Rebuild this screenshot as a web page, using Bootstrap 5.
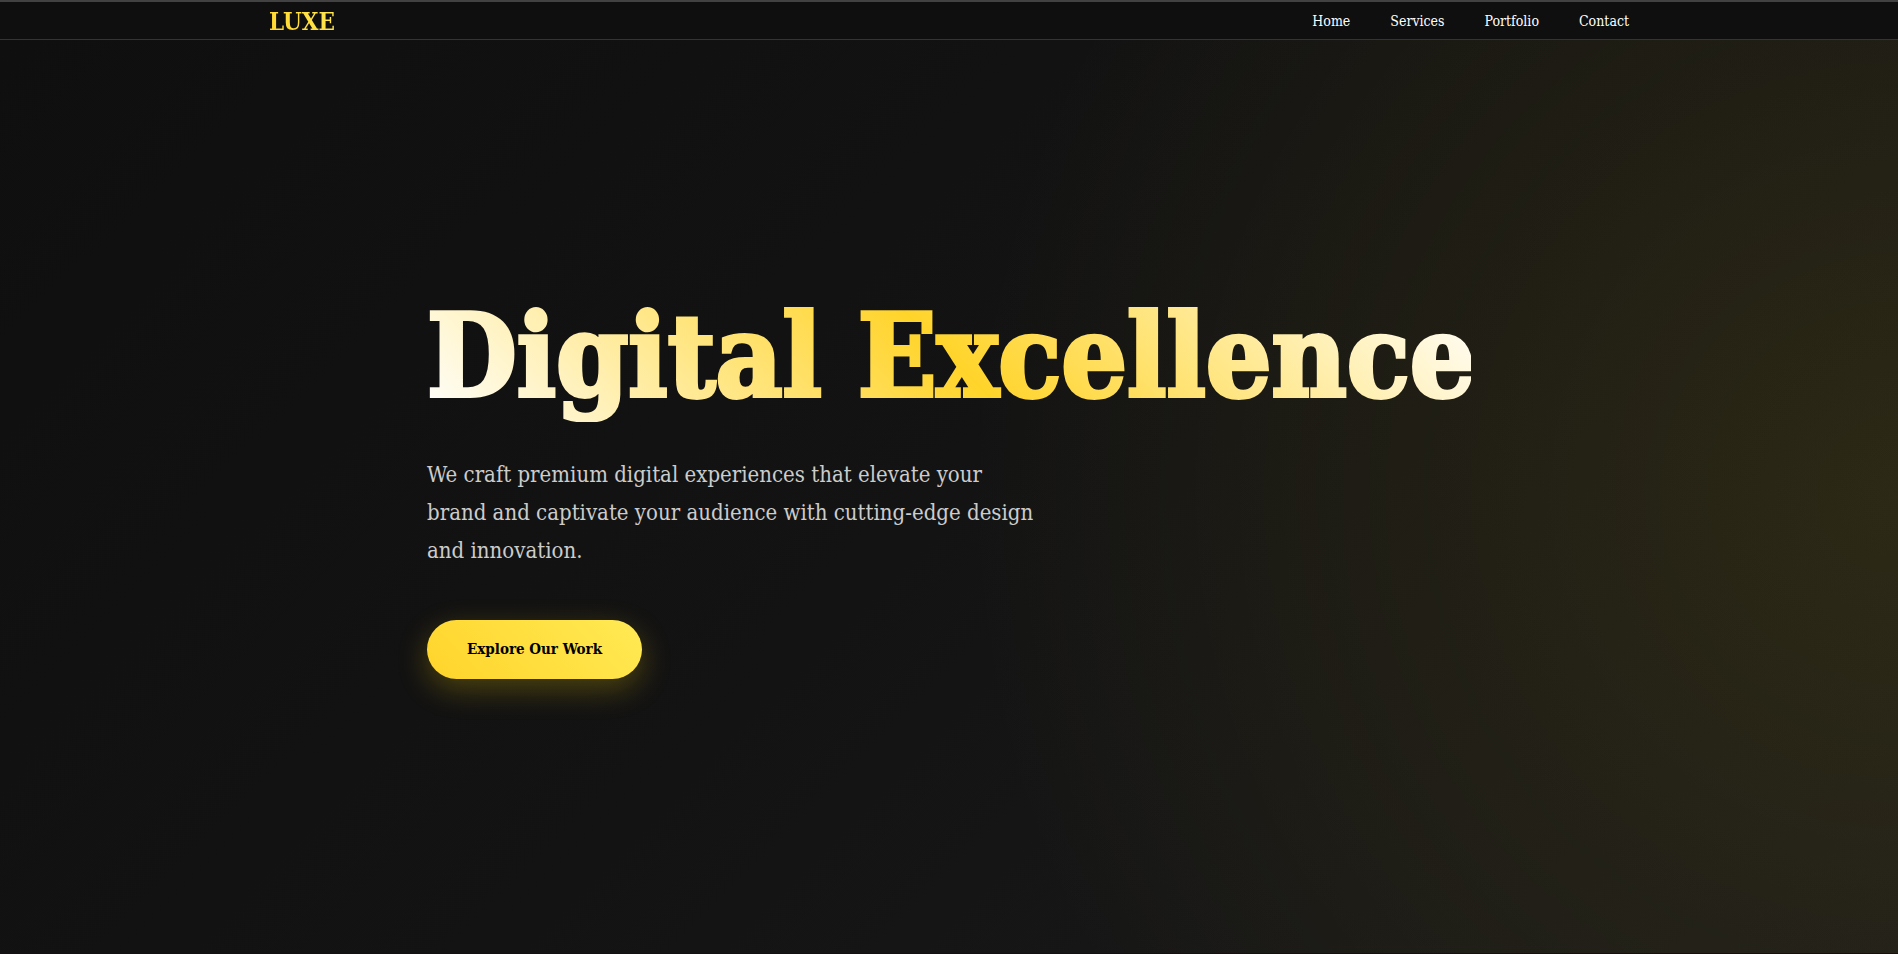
<!DOCTYPE html>
<html lang="en">
<head>
<meta charset="utf-8">
<meta name="viewport" content="width=device-width, initial-scale=1">
<title>LUXE</title>
<link href="https://cdn.jsdelivr.net/npm/bootstrap@5.3.0/dist/css/bootstrap.min.css" rel="stylesheet">
<style>
  body { font-family: "DejaVu Serif Condensed", "DejaVu Serif", serif; background: #111; color: #fff; }
  .site-header { background: #0f0f0f; border-top: 2px solid #424242; border-bottom: 1px solid #40331b; }
  .site-width { max-width: 1400px; padding: 2px 20px 0; }
  .brand-name { font-size: 24px; line-height: 35px; font-weight: 700; background: linear-gradient(45deg, #ffd42a, #ffea55); background-clip: text; -webkit-background-clip: text; color: transparent; }
  .menu-list { gap: 40px; }
  .menu-item { font-size: 14px; line-height: 35px; color: #fff; }
  .hero { background: radial-gradient(ellipse 940px 960px at 100% 50%, rgba(255,215,0,.09), rgba(255,215,0,.05) 45%, rgba(255,215,0,0)), linear-gradient(135deg, #0f0f0f, #131313 50%, #1a1a1a); border-bottom: 1px solid #170e10; }
  .hero-body { max-width: 1044px; padding-bottom: 24px; }
  .hero-title { font-size: 115px; line-height: 132px; font-weight: 700; margin-bottom: 34px; background: linear-gradient(45deg, #fff, #ffd42a 50%, #fff); background-clip: text; -webkit-background-clip: text; color: transparent; -webkit-text-stroke: 4px transparent; }
  .hero-text { max-width: 613px; font-size: 22px; line-height: 38px; color: #ccc; margin-bottom: 50px; }
  .hero-button { font-size: 15px; line-height: 27px; font-weight: 700; padding: 16px 40px; color: #000; background: linear-gradient(45deg, #ffd42a, #ffea55); box-shadow: 0 10px 30px rgba(255,215,0,.25); }
  @media (min-width: 1100px) { .hero-title { white-space: nowrap; } }
</style>
</head>
<body>
<div class="d-flex flex-column min-vh-100">
  <header class="site-header">
    <nav class="site-width w-100 mx-auto d-flex justify-content-between">
      <a class="brand-name text-decoration-none" href="#">LUXE</a>
      <ul class="menu-list list-unstyled d-flex mb-0">
        <li><a class="menu-item d-block text-decoration-none" href="#">Home</a></li>
        <li><a class="menu-item d-block text-decoration-none" href="#">Services</a></li>
        <li><a class="menu-item d-block text-decoration-none" href="#">Portfolio</a></li>
        <li><a class="menu-item d-block text-decoration-none" href="#">Contact</a></li>
      </ul>
    </nav>
  </header>
  <main class="hero flex-grow-1 d-flex align-items-center justify-content-center">
    <section class="hero-body w-100">
      <h1 class="hero-title">Digital Excellence</h1>
      <p class="hero-text">We craft premium digital experiences that elevate your brand and captivate your audience with cutting-edge design and innovation.</p>
      <button type="button" class="hero-button btn rounded-pill border-0">Explore Our Work</button>
    </section>
  </main>
</div>
<script src="https://cdn.jsdelivr.net/npm/bootstrap@5.3.0/dist/js/bootstrap.bundle.min.js"></script>
</body>
</html>
